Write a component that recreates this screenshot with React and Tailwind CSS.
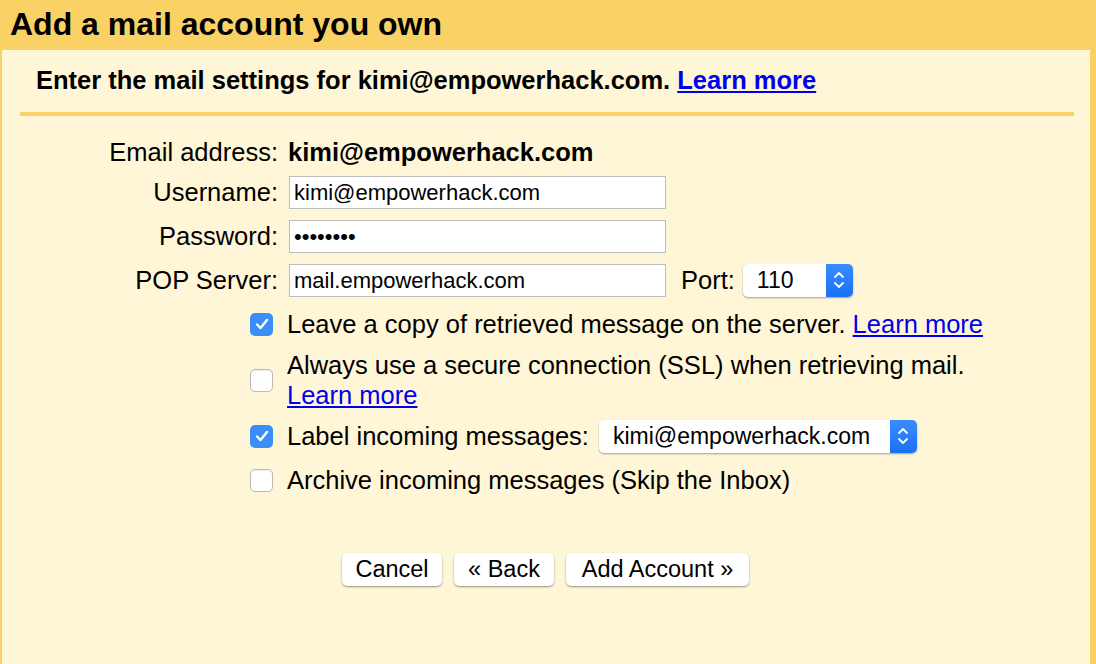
import React from "react";

function Stepper() {
  return (
    <div className="w-[27px] self-stretch bg-gradient-to-b from-[#3a8dfc] to-[#1a6ff6] rounded-r-[5px] flex items-center justify-center">
      <svg width="12" height="22" viewBox="0 0 12 22" fill="none" stroke="white" strokeWidth="1.8" strokeLinecap="round" strokeLinejoin="round">
        <path d="M2 8 L6 4 L10 8" />
        <path d="M2 14 L6 18 L10 14" />
      </svg>
    </div>
  );
}

function Select({ value, className }) {
  return (
    <div className={"flex h-[33px] bg-white rounded-[5px] shadow-[0_1px_2px_rgba(0,0,0,0.35)] " + className}>
      <div className="flex-1 flex items-center pl-[14px] text-[23px]">{value}</div>
      <Stepper />
    </div>
  );
}

function Check({ checked }) {
  if (checked) {
    return (
      <div className="w-[23px] h-[23px] rounded-[5px] bg-[#3b8ef6] flex items-center justify-center shrink-0">
        <svg width="14" height="12" viewBox="0 0 14 12" fill="none" stroke="white" strokeWidth="2.4" strokeLinecap="round" strokeLinejoin="round">
          <path d="M2 6.5 L5.5 10 L12 2" />
        </svg>
      </div>
    );
  }
  return (
    <div className="w-[23px] h-[23px] rounded-[5px] bg-white border border-[#b9b9b9] shrink-0 shadow-[inset_0_1px_1px_rgba(0,0,0,0.08)]" />
  );
}

function Field({ label, children }) {
  return (
    <div className="flex items-center h-[44px]">
      <div className="w-[287px] text-right pr-[11px] text-[25.5px]">{label}</div>
      {children}
    </div>
  );
}

function Input({ value }) {
  return (
    <div className="w-[377px] h-[33px] bg-white border border-[#bdbdbd] flex items-center pl-[4px] text-[22px]">
      {value}
    </div>
  );
}

function Btn({ children, w }) {
  return (
    <div className={"h-[33px] bg-white rounded-[5px] shadow-[0_1px_2px_rgba(0,0,0,0.4)] flex items-center justify-center text-[23.5px] " + w}>
      {children}
    </div>
  );
}

export default function App() {
  return (
    <div className="w-[1096px] h-[664px] bg-[#fad165] flex flex-col font-['Liberation_Sans',Arial,sans-serif] text-black overflow-hidden">
      <div className="h-[50px] pl-[10px] pb-[3px] flex items-center text-[32px] font-bold shrink-0">
        Add a mail account you own
      </div>
      <div className="flex-1 ml-[2px] mr-[6px] bg-[#fff6d7] flex flex-col">
        <div className="pl-[34px] pt-[15px] text-[25.5px] font-bold leading-[31px]">
          Enter the mail settings for kimi@empowerhack.com.{" "}
          <span className="text-[#0000ee] underline">Learn more</span>
        </div>
        <div className="ml-[18px] mr-[16px] mt-[16px] h-[4px] bg-[#fad165]" />
        <div className="mt-[16px] flex flex-col">
          <div className="flex items-center h-[40px] -mb-[2px]">
            <div className="w-[287px] text-right pr-[11px] text-[25.5px]">Email address:</div>
            <div className="text-[25.5px] font-bold -ml-[1px]">kimi@empowerhack.com</div>
          </div>
          <Field label="Username:">
            <Input value="kimi@empowerhack.com" />
          </Field>
          <Field label="Password:">
            <Input value="••••••••" />
          </Field>
          <Field label="POP Server:">
            <Input value="mail.empowerhack.com" />
            <div className="ml-[15px] text-[25.5px]">Port:</div>
            <Select value="110" className="ml-[8px] w-[110px]" />
          </Field>
          <div className="pl-[248px] mt-[7px] flex flex-col text-[25.5px] leading-[30px]">
            <div className="flex items-center gap-[14px] h-[30px]">
              <Check checked />
              <div>
                Leave a copy of retrieved message on the server.{" "}
                <span className="text-[#0000ee] underline">Learn more</span>
              </div>
            </div>
            <div className="flex items-center gap-[14px] mt-[11px] h-[60px]">
              <Check />
              <div>
                Always use a secure connection (SSL) when retrieving mail.
                <br />
                <span className="text-[#0000ee] underline">Learn more</span>
              </div>
            </div>
            <div className="flex items-center gap-[14px] mt-[9px] h-[34px]">
              <Check checked />
              <div className="whitespace-nowrap">Label incoming messages:</div>
              <Select value="kimi@empowerhack.com" className="-ml-[4px] w-[318px]" />
            </div>
            <div className="flex items-center gap-[14px] mt-[12px] h-[30px]">
              <Check />
              <div>Archive incoming messages (Skip the Inbox)</div>
            </div>
          </div>
          <div className="mt-[58px] pl-[340px] flex gap-[12px]">
            <Btn w="w-[100px]">Cancel</Btn>
            <Btn w="w-[100px]">« Back</Btn>
            <Btn w="w-[183px]">Add Account »</Btn>
          </div>
        </div>
      </div>
    </div>
  );
}
